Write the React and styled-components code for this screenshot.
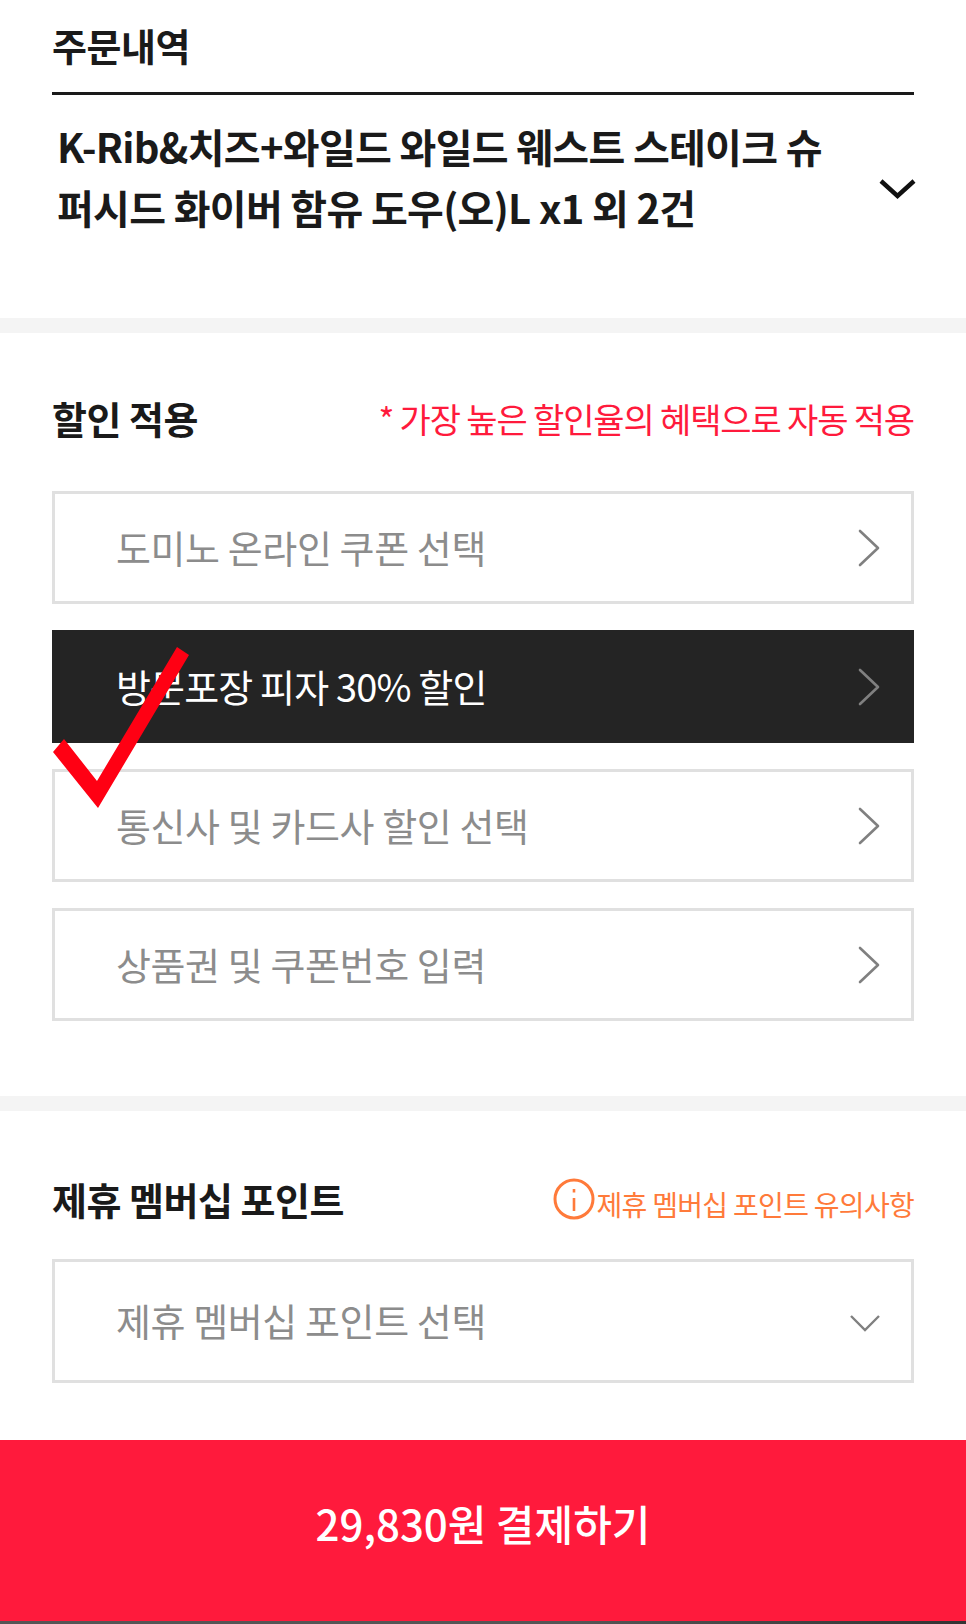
import React from 'react';
import styled, { createGlobalStyle } from 'styled-components';

const GlobalStyle = createGlobalStyle`
  html, body {
    margin: 0;
    padding: 0;
    background: #fff;
  }
  body {
    font-family: "Noto Sans CJK KR", "Noto Sans", sans-serif;
  }
`;

const Page = styled.div`
  position: relative;
  width: 966px;
  height: 1624px;
  overflow: hidden;
  background: #fff;
  display: flex;
  flex-direction: column;
`;

const OrderSection = styled.section`
  height: 319px;
  padding: 0 52px;
  box-sizing: border-box;
`;

const Title = styled.h2`
  margin: 0;
  font-size: 38px;
  line-height: 56px;
  font-weight: 700;
  letter-spacing: -0.5px;
  color: #1a1a1a;
`;

const OrderHead = styled.div`
  height: 95px;
  box-sizing: border-box;
  padding-top: 17px;
  border-bottom: 3px solid #1a1a1a;
`;

const OrderBody = styled.div`
  display: flex;
  align-items: center;
  justify-content: space-between;
  padding: 21px 0 0 5px;
`;

const OrderText = styled.p`
  margin: 0;
  width: 780px;
  font-size: 40px;
  line-height: 61px;
  font-weight: 700;
  letter-spacing: -0.7px;
  color: #1a1a1a;
`;

const Band = styled.div`
  height: 15px;
  flex: none;
  background: #f4f4f4;
`;

const Section = styled.section`
  height: ${p => p.$height}px;
  flex: none;
  padding: 0 52px;
  box-sizing: border-box;
`;

const SectionHead = styled.div`
  height: ${p => p.$height}px;
  box-sizing: border-box;
  padding-top: ${p => p.$pad}px;
  display: flex;
  align-items: center;
  justify-content: space-between;
`;

const Note = styled.span`
  font-size: 34px;
  letter-spacing: -1.15px;
  color: #ff1a3c;
`;

const Notice = styled.span`
  display: flex;
  align-items: center;
  gap: 2px;
  font-size: 28px;
  letter-spacing: -0.7px;
  color: #ff7a3a;
`;

const NoticeText = styled.span`
  padding-top: 10px;
`;

const List = styled.div`
  display: flex;
  flex-direction: column;
  gap: 26px;
`;

const Row = styled.div`
  height: ${p => p.$height || 113}px;
  box-sizing: border-box;
  display: flex;
  align-items: center;
  justify-content: space-between;
  padding: 0 31px ${p => p.$lift || 2}px 61px;
  border: 3px solid ${p => (p.$active ? '#242424' : '#e0e0e0')};
  background: ${p => (p.$active ? '#242424' : '#fff')};
  color: ${p => (p.$active ? '#fff' : '#8c8c8c')};
  font-size: 38px;
  letter-spacing: ${p => (p.$active ? '-0.85px' : '-0.4px')};
`;

const PayButton = styled.button`
  flex: none;
  height: 181px;
  border: 0;
  padding: 0 0 16px;
  background: #ff1a3c;
  color: #fff;
  font-family: inherit;
  font-size: 42px;
  font-weight: 500;
  letter-spacing: 0;
`;

const BottomEdge = styled.div`
  height: 3px;
  flex: none;
  background: linear-gradient(90deg, #555 0%, #555 60%, #333 100%);
`;

const CheckMark = styled.svg`
  position: absolute;
  left: 50px;
  top: 644px;
`;

const BoldDownIcon = styled.svg`
  flex: none;
  margin: 24px -2px 0 0;
`;

const ArrowIcon = styled.svg`
  flex: none;
  margin-top: 2px;
`;

const DownIcon = styled.svg`
  flex: none;
  margin-top: 9px;
`;

const RightArrow = () => (
  <ArrowIcon width="22" height="38" viewBox="0 0 22 38" fill="none">
    <path d="M2 2L20 19L2 36" stroke="#808080" strokeWidth="2.6" strokeLinecap="round" strokeLinejoin="round" />
  </ArrowIcon>
);

const DownArrow = () => (
  <DownIcon width="30" height="17" viewBox="0 0 30 17" fill="none">
    <path d="M1 1L15 15L29 1" stroke="#808080" strokeWidth="2.4" />
  </DownIcon>
);

const BoldDown = () => (
  <BoldDownIcon width="37" height="20" viewBox="0 0 37 20" fill="none">
    <path d="M2 2L18.5 17L35 2" stroke="#111" strokeWidth="4.4" />
  </BoldDownIcon>
);

const InfoIcon = () => (
  <svg width="42" height="42" viewBox="0 0 42 42" fill="none">
    <circle cx="21" cy="21" r="19" stroke="#ff7a3a" strokeWidth="3" />
    <path d="M21 20V33" stroke="#ff7a3a" strokeWidth="2.6" />
    <path d="M21 11V14.5" stroke="#ff7a3a" strokeWidth="2.6" />
  </svg>
);

const discounts = [
  { label: '도미노 온라인 쿠폰 선택' },
  { label: '방문포장 피자 30% 할인', active: true },
  { label: '통신사 및 카드사 할인 선택' },
  { label: '상품권 및 쿠폰번호 입력' },
];

export default function App() {
  return (
    <Page>
      <GlobalStyle />
      <OrderSection>
        <OrderHead>
          <Title>주문내역</Title>
        </OrderHead>
        <OrderBody>
          <OrderText>K-Rib&amp;치즈+와일드 와일드 웨스트 스테이크 슈퍼시드 화이버 함유 도우(오)L x1 외 2건</OrderText>
          <BoldDown />
        </OrderBody>
      </OrderSection>
      <Band />
      <Section $height={763}>
        <SectionHead $height={158} $pad={12}>
          <Title>할인 적용</Title>
          <Note>* 가장 높은 할인율의 혜택으로 자동 적용</Note>
        </SectionHead>
        <List>
          {discounts.map(item => (
            <Row key={item.label} $active={item.active}>
              {item.label}
              <RightArrow />
            </Row>
          ))}
        </List>
      </Section>
      <Band />
      <Section $height={329}>
        <SectionHead $height={148} $pad={27}>
          <Title>제휴 멤버십 포인트</Title>
          <Notice>
            <InfoIcon />
            <NoticeText>제휴 멤버십 포인트 유의사항</NoticeText>
          </Notice>
        </SectionHead>
        <Row $height={124} $lift={4}>
          제휴 멤버십 포인트 선택
          <DownArrow />
        </Row>
      </Section>
      <PayButton>29,830원 결제하기</PayButton>
      <BottomEdge />
      <CheckMark width="142" height="168" viewBox="0 0 142 168">
        <polygon points="127,3 139,11 48,164 3,108 14,95 47,137" fill="#ff0013" />
      </CheckMark>
    </Page>
  );
}
